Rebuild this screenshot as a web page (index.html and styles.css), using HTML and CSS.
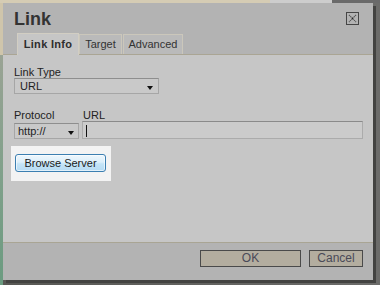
FILE: index.html
```html
<!DOCTYPE html>
<html>
<head>
<meta charset="utf-8">
<link rel="stylesheet" href="styles.css">
</head>
<body>
<div class="dialog">
  <div class="titlebar">
    <div class="head">
      <div class="title">Link</div>
      <div class="close">
        <svg width="13" height="13" viewBox="0 0 13 13">
          <rect x="0.5" y="0.5" width="12" height="12" fill="none" stroke="#454545"/>
          <path d="M3 3 L10 10 M10 3 L3 10" stroke="#555" stroke-width="1.2" stroke-dasharray="1.2 0.6"/>
          <rect x="6" y="6" width="1" height="1" fill="#222"/>
        </svg>
      </div>
    </div>
    <div class="tabs">
      <div class="tab active">Link Info</div>
      <div class="tab t-target">Target</div>
      <div class="tab t-adv">Advanced</div>
    </div>
  </div>
  <div class="content">
    <div class="label">Link Type</div>
    <div class="select sel-type"><span>URL</span><i class="arrow"></i></div>
    <div class="row">
      <div class="field f-proto">
        <div class="label">Protocol</div>
        <div class="select sel-proto"><span>http://</span><i class="arrow"></i></div>
      </div>
      <div class="field f-url">
        <div class="label">URL</div>
        <div class="input"><i class="caret"></i></div>
      </div>
    </div>
    <div class="highlight">
      <div class="browse">Browse Server</div>
    </div>
  </div>
  <div class="footer">
    <div class="btn ok">OK</div>
    <div class="btn cancel">Cancel</div>
  </div>
</div>
</body>
</html>
```
FILE: styles.css
```css
html {
  background: #5a5a56;
}
body {
  margin: 0;
  width: 380px;
  height: 285px;
  padding: 3px 0 0 3px;
  box-sizing: border-box;
  overflow: hidden;
  font-family: "Liberation Sans", Arial, sans-serif;
  font-size: 11px;
  color: #222;
  background:
    linear-gradient(to right, #d5ccb4 0, #d5ccb4 270px, #cdcdcd 270px, #cdcdcd 332px, #6a6a6a 332px) top left / 100% 3px no-repeat,
    linear-gradient(to bottom, #cfc5ab 0, #cfc5ab 55px, #9aa394 55px, #7fa08a 180px, #6b9b80 285px) top left / 3px 100% no-repeat,
    linear-gradient(to right, #585854, #6c6c6a) ;
}
.dialog {
  width: 370px;
  height: 277px;
  display: flex;
  flex-direction: column;
  background: #c6c6c6;
  box-shadow: 3px 3px 0 #434341;
}
.titlebar {
  background: #b3b3b3;
  padding: 6px 14px 0 11px;
  border-bottom: 1px solid #aaa594;
  display: flex;
  flex-direction: column;
}
.head {
  height: 24px;
  display: flex;
  justify-content: space-between;
  align-items: flex-start;
}
.title {
  font-size: 18px;
  font-weight: bold;
  line-height: 20px;
  color: #333;
}
.close {
  margin-top: 3px;
  width: 13px;
  height: 13px;
}
.close svg {
  display: block;
}
.tabs {
  display: flex;
  align-items: flex-end;
  margin-left: 3px;
  margin-bottom: -1px;
  height: 22px;
}
.tab {
  box-sizing: border-box;
  height: 20px;
  margin-bottom: 1px;
  border: 1px solid #cbc7bb;
  border-bottom: none;
  background: #bababa;
  color: #333;
  line-height: 14px;
  padding-top: 2px;
  text-align: center;
}
.tab.active {
  height: 22px;
  margin-bottom: 0;
  width: 62px;
  background: #c6c6c6;
  border-color: #d2cec3;
  font-weight: bold;
  letter-spacing: 0.3px;
  padding-top: 3px;
  color: #2e2e2e;
}
.t-target {
  width: 43px;
}
.t-adv {
  width: 60px;
  margin-left: 1px;
}
.content {
  flex: 1;
  padding: 11px 10px 0 11px;
  display: flex;
  flex-direction: column;
  align-items: flex-start;
}
.label {
  line-height: 12px;
  height: 12px;
  color: #222;
}
.select {
  box-sizing: border-box;
  height: 16px;
  background: #c9c9c9;
  border: 1px solid #a6a6a6;
  border-top-color: #8e8e8e;
  display: flex;
  justify-content: space-between;
  align-items: center;
  line-height: 15px;
  color: #1e1e1e;
}
.select span {
  align-self: flex-start;
}
.sel-type {
  width: 145px;
  padding: 0 5px 0 5px;
}
.sel-proto {
  width: 65px;
  margin-top: 2px;
  padding: 0 4px 0 3px;
}
.arrow {
  width: 0;
  height: 0;
  border-left: 3px solid transparent;
  border-right: 3px solid transparent;
  border-top: 4px solid #111;
  margin-top: 3px;
}
.row {
  margin-top: 15px;
  display: flex;
  align-items: flex-end;
  gap: 3px;
}
.field {
  display: flex;
  flex-direction: column;
}
.f-url .label {
  margin-left: 1px;
}
.input {
  box-sizing: border-box;
  width: 281px;
  height: 18px;
  background: #cbcbcb;
  border: 1px solid #ababab;
  border-top-color: #8a8a8a;
  padding: 3px 0 0 3px;
}
.caret {
  display: block;
  width: 1px;
  height: 12px;
  background: #111;
}
.highlight {
  margin: 7px 0 0 -3px;
  background: #f3f3f3;
  padding: 8px 5px 9px 4px;
}
.browse {
  box-sizing: border-box;
  width: 91px;
  height: 18px;
  border: 1px solid #3c7fb1;
  border-radius: 3px;
  background: linear-gradient(to bottom, #eef7fd 0%, #dcefFa 45%, #c4e4f7 55%, #b6dbf3 100%);
  box-shadow: inset 0 0 0 1px rgba(255,255,255,0.6);
  text-align: center;
  line-height: 17px;
  color: #1a1a1a;
}
.footer {
  height: 30px;
  border-top: 1px solid #a9a594;
  background: #b3b3b3;
  display: flex;
  justify-content: flex-end;
  align-items: flex-start;
  gap: 8px;
  padding: 7px 10px 0 0;
}
.btn {
  box-sizing: border-box;
  height: 17px;
  border: 1px solid #4a4a4a;
  background: #b3ad9f;
  color: #4a4a58;
  text-align: center;
  font-size: 12px;
  line-height: 15px;
}
.ok {
  width: 101px;
}
.cancel {
  width: 54px;
}
```
